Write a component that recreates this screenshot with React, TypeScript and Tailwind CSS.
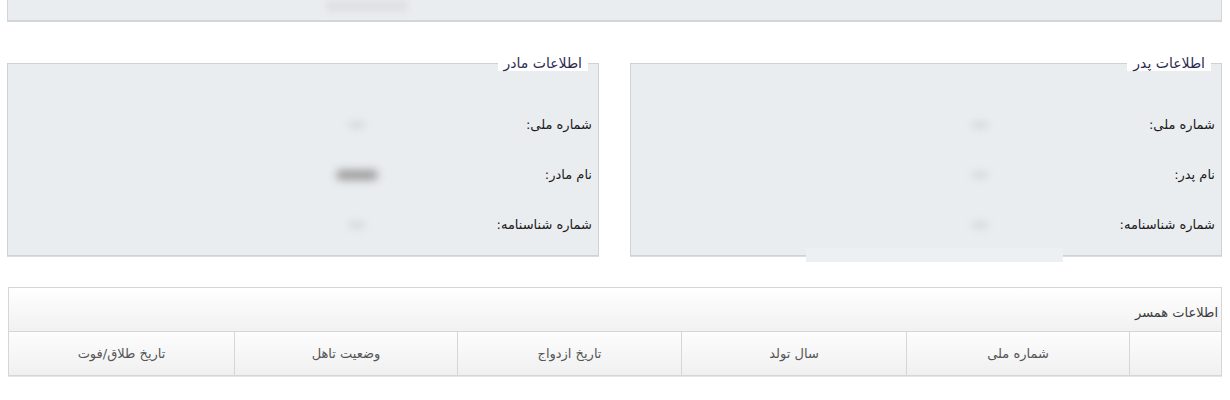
import React from "react";

const font = { fontFamily: '"DejaVu Sans", Tahoma, sans-serif' };

function Blob({ dark }: { dark?: boolean }) {
  return dark ? (
    <div className="h-[10px] w-[42px] rounded-full bg-[#9b9b9b] blur-[4px]" />
  ) : (
    <div className="h-[10px] w-[18px] rounded-full bg-[#dcdfe3] blur-[3px]" />
  );
}

function Row({ label, dark }: { label: string; dark?: boolean }) {
  return (
    <div className="flex h-[50px] items-center">
      <div className="w-[130px] shrink-0 whitespace-nowrap text-right text-[13px] text-[#1a1a1a]">{label}</div>
      <div className="flex w-[210px] justify-center">
        <Blob dark={dark} />
      </div>
    </div>
  );
}

function Box({ title, rows, patch }: { title: string; rows: { label: string; dark?: boolean }[]; patch?: boolean }) {
  return (
    <fieldset className="relative h-[201px] border border-[#cfd2d5] bg-[#eaedf0] px-[6px] shadow-[0_1px_0_#dadcdf]">
      <legend className="mr-[4px] bg-white px-[6px] text-[14px] leading-[16px] text-[#2c2950]">{title}</legend>
      <div className="pt-[29px]">
        {rows.map((r) => (
          <Row key={r.label} label={r.label} dark={r.dark} />
        ))}
      </div>
      {patch && (
        <div className="pointer-events-none absolute left-[175px] top-[177px] h-[14px] w-[257px] bg-[#edf0f3]" />
      )}
    </fieldset>
  );
}

export default function App() {
  return (
    <div dir="rtl" className="min-h-[400px] bg-white pl-[7px] pr-[8px]" style={font}>
      <div className="relative h-[22px] border-x border-b-2 border-[#d3d5d8] bg-[#eaedf0]">
        <div className="absolute left-[318px] top-0 h-[12px] w-[82px] bg-[#dfe1e4] blur-[3px]" />
      </div>

      <div className="mt-[33px] grid grid-cols-2 gap-[31px]">
        <Box
          title="اطلاعات پدر"
          patch
          rows={[{ label: "شماره ملی:" }, { label: "نام پدر:" }, { label: "شماره شناسنامه:" }]}
        />
        <Box
          title="اطلاعات مادر"
          rows={[{ label: "شماره ملی:" }, { label: "نام مادر:", dark: true }, { label: "شماره شناسنامه:" }]}
        />
      </div>

      <div className="mt-[31px] ml-[1px] border border-[#d6d6d6] shadow-[0_1px_0_#e4e4e4]">
        <div className="flex h-[43px] items-end bg-gradient-to-b from-white to-[#f1f1f1] pb-[9px] pr-[3px] text-[13px] text-[#3c3c3c]">
          اطلاعات همسر
        </div>
        <div className="grid h-[44px] grid-cols-[92px_223px_225px_224px_223px_1fr] border-t border-[#d6d6d6] bg-gradient-to-b from-[#fdfdfd] to-[#f0f0f0] text-[13px] text-[#555]">
          <div className="border-l border-[#d6d6d6]" />
          <div className="flex items-center justify-center border-l border-[#d6d6d6]">شماره ملی</div>
          <div className="flex items-center justify-center border-l border-[#d6d6d6]">سال تولد</div>
          <div className="flex items-center justify-center border-l border-[#d6d6d6]">تاریخ ازدواج</div>
          <div className="flex items-center justify-center border-l border-[#d6d6d6]">وضعیت تاهل</div>
          <div className="flex items-center justify-center">تاریخ طلاق/فوت</div>
        </div>
      </div>
    </div>
  );
}
